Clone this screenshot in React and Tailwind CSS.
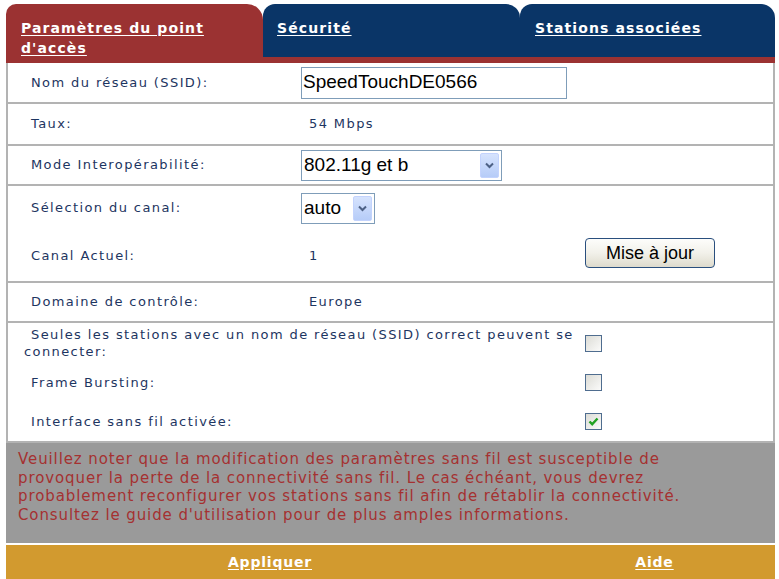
import React from "react";

const label = "text-[13px] tracking-[1.4px] text-[#1d3561]";
const arial = { fontFamily: '"Liberation Sans", Arial, sans-serif' };

const Checkbox = ({ checked }) => (
  <div className="w-[17px] h-[17px] border border-[#4f6d8f] bg-gradient-to-br from-[#dcdcd6] to-[#fbfbfa] flex items-center justify-center">
    {checked && (
      <svg width="11" height="11" viewBox="0 0 11 11">
        <path d="M1.5 5.5 L4.2 8.2 L9.5 2.5" fill="none" stroke="#21a121" strokeWidth="2.4" />
      </svg>
    )}
  </div>
);

const Select = ({ value, className = "" }) => (
  <div className={`h-[31px] border border-[#7f9db9] bg-white flex items-center justify-between pl-[2px] pr-[2px] ${className}`}>
    <span className="text-[19px] text-black" style={arial}>
      {value}
    </span>
    <div className="w-[19px] h-[25px] rounded-[2px] bg-gradient-to-b from-[#d6e3fd] to-[#b6ccf8] border border-[#c3d3fd] flex items-center justify-center">
      <svg width="9" height="7" viewBox="0 0 9 7">
        <path d="M1 1.5 L4.5 5 L8 1.5" fill="none" stroke="#4d6185" strokeWidth="2" />
      </svg>
    </div>
  </div>
);

const TabLink = ({ children }) => (
  <a className="text-white font-bold text-[14px] underline underline-offset-2 tracking-[1.1px]">{children}</a>
);

export default function App() {
  return (
    <div className="w-[779px] h-[579px] bg-white overflow-hidden" style={{ fontFamily: '"DejaVu Sans", Verdana, sans-serif' }}>
      {/* Tabs */}
      <div className="pt-[4px] pl-[6px] pr-[4px]">
        <div className="flex h-[53px] leading-[19px]">
          <div className="w-[257px] bg-[#9b3232] rounded-tl-[10px] rounded-tr-[16px] pl-[15px] pr-[40px] pt-[14px]">
            <TabLink>Paramètres du point d'accès</TabLink>
          </div>
          <div className="w-[257px] bg-[#0a3567] rounded-tl-[12px] rounded-tr-[14px] pl-[14px] pt-[14px]">
            <TabLink>Sécurité</TabLink>
          </div>
          <div className="flex-1 bg-[#0a3567] rounded-tl-[12px] rounded-tr-[14px] pl-[15px] pt-[14px]">
            <TabLink>Stations associées</TabLink>
          </div>
        </div>
        <div className="h-[6px] bg-[#9b3232]" />
      </div>

      {/* Content */}
      <div className="mr-[4px] ml-[6px] border-l-2 border-r-2 border-[#b3b3b3]">
        <div className="h-[41px] flex items-center border-b-2 border-[#b3b3b3]">
          <div className={`w-[293px] pl-[23px] ${label}`}>Nom du réseau (SSID):</div>
          <div className="w-[266px] h-[32px] border border-[#7f9db9] flex items-center pl-[1px] text-[19px] text-black" style={arial}>
            SpeedTouchDE0566
          </div>
        </div>
        <div className="h-[42px] flex items-center border-b-2 border-[#b3b3b3]">
          <div className={`w-[293px] pl-[23px] ${label}`}>Taux:</div>
          <div className={`pl-[8px] ${label}`}>54 Mbps</div>
        </div>
        <div className="h-[40px] flex items-center border-b-2 border-[#b3b3b3]">
          <div className={`w-[293px] pl-[23px] ${label}`}>Mode Interopérabilité:</div>
          <Select value="802.11g et b" className="w-[201px]" />
        </div>
        <div className="h-[44px] flex items-center">
          <div className={`w-[293px] pl-[23px] ${label}`}>Sélection du canal:</div>
          <Select value="auto" className="w-[74px]" />
        </div>
        <div className="h-[53px] flex items-center border-b-2 border-[#b3b3b3]">
          <div className={`w-[293px] pl-[23px] ${label}`}>Canal Actuel:</div>
          <div className={`w-[284px] pl-[8px] ${label}`}>1</div>
          <button
            className="w-[130px] h-[30px] mt-[-5px] rounded-[4px] border border-[#2a4f7e] bg-gradient-to-b from-[#fdfdfb] via-[#f2f1ea] to-[#dedbcd] text-[18px] text-black"
            style={arial}
          >
            Mise à jour
          </button>
        </div>
        <div className="h-[40px] flex items-center border-b-2 border-[#b3b3b3]">
          <div className={`w-[293px] pl-[23px] ${label}`}>Domaine de contrôle:</div>
          <div className={`pl-[8px] ${label}`}>Europe</div>
        </div>
        <div className="h-[40px] flex items-start">
          <div className={`w-[577px] pl-[16px] pt-[3px] leading-[17px] indent-[7px] ${label}`}>
            Seules les stations avec un nom de réseau (SSID) correct peuvent se connecter:
          </div>
          <div className="mt-[12px]">
            <Checkbox />
          </div>
        </div>
        <div className="h-[39px] flex items-center">
          <div className={`w-[577px] pl-[23px] ${label}`}>Frame Bursting:</div>
          <Checkbox />
        </div>
        <div className="h-[41px] flex items-center border-b-2 border-[#b3b3b3]">
          <div className={`w-[577px] pl-[23px] ${label}`}>Interface sans fil activée:</div>
          <Checkbox checked />
        </div>
      </div>

      {/* Note */}
      <div className="ml-[6px] mr-[4px] h-[100px] bg-[#9a9a9a] pl-[12px] pr-[45px] pt-[7px] text-[15px] leading-[18.7px] tracking-[0.9px] text-[#a53131]">
        Veuillez noter que la modification des paramètres sans fil est susceptible de provoquer la perte de la connectivité sans fil. Le cas échéant, vous devrez probablement reconfigurer vos stations sans fil afin de rétablir la connectivité. Consultez le guide d'utilisation pour de plus amples informations.
      </div>

      {/* Footer */}
      <div className="ml-[6px] mr-[4px] mt-[2px] h-[34px] bg-[#d29a2f] flex items-center">
        <div className="w-[528px] text-center">
          <a className="text-white font-bold text-[14px] underline underline-offset-2 tracking-[0.8px]">Appliquer</a>
        </div>
        <div className="flex-1 text-center">
          <a className="text-white font-bold text-[14px] underline underline-offset-2 tracking-[0.8px]">Aide</a>
        </div>
      </div>
    </div>
  );
}
